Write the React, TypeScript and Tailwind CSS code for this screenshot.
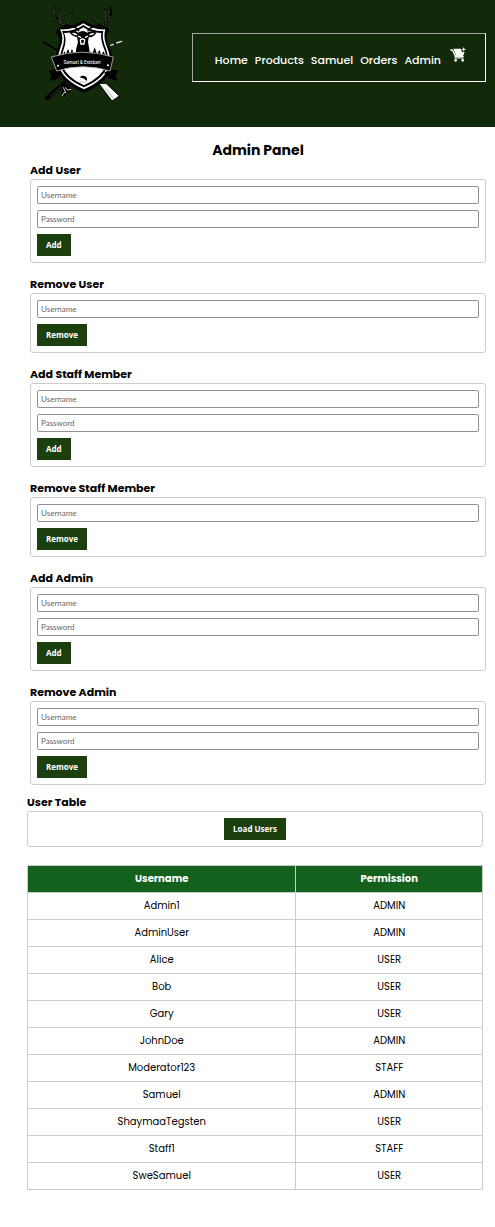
import React, { useState } from "react";

const BUTTON =
  "h-[22px] bg-[#1b400e] px-[9px] font-['Open_Sans',sans-serif] text-[8px] font-bold text-white hover:bg-[#28591a]";

const LINKS = ["Home", "Products", "Samuel", "Orders", "Admin"];

const FORMS = [
  { title: "Add User", fields: ["Username", "Password"], action: "Add" },
  { title: "Remove User", fields: ["Username"], action: "Remove" },
  { title: "Add Staff Member", fields: ["Username", "Password"], action: "Add" },
  { title: "Remove Staff Member", fields: ["Username"], action: "Remove" },
  { title: "Add Admin", fields: ["Username", "Password"], action: "Add" },
  { title: "Remove Admin", fields: ["Username", "Password"], action: "Remove" },
];

const USERS = [
  ["Admin1", "ADMIN"],
  ["AdminUser", "ADMIN"],
  ["Alice", "USER"],
  ["Bob", "USER"],
  ["Gary", "USER"],
  ["JohnDoe", "ADMIN"],
  ["Moderator123", "STAFF"],
  ["Samuel", "ADMIN"],
  ["ShaymaaTegsten", "USER"],
  ["Staff1", "STAFF"],
  ["SweSamuel", "USER"],
];

function Logo() {
  return (
    <svg viewBox="30 12 258 300" className="h-[100px] w-[86px]" role="img" aria-label="Samuel & Esteban">
      {/* rifle barrels and stocks */}
      <g strokeLinecap="round" fill="none">
        <path d="M40 125 L82 151" stroke="#000" strokeWidth="5" />
        <path d="M237 139 L276 125" stroke="#000" strokeWidth="3" />
        <path d="M242 136 L250 133 M260 129 L275 124" stroke="#e5e5e5" strokeWidth="4" />
        <path d="M102 250 L52 294" stroke="#000" strokeWidth="13" />
        <path d="M96 259 L62 289" stroke="#4b5548" strokeWidth="2" />
      </g>
      <path d="M104 248 L120 260 L126 270 L114 278 L102 292 L94 286 L96 268 Z" fill="#000" />
      <path d="M106 262 L112 270 L124 268 M104 276 L96 288 M100 262 L108 280" stroke="#ddd" strokeWidth="3" fill="none" />
      <path d="M206 250 L228 250 L268 288 L246 303 Z" fill="#fff" stroke="#000" strokeWidth="3" />
      <path d="M228 266 L250 296" stroke="#888" strokeWidth="2" />
      {/* shield */}
      <path d="M160 60 Q190 82 228 80 Q240 84 236 96 Q222 110 238 142 Q252 170 244 204 Q232 248 162 278 Q92 248 80 204 Q72 170 84 142 Q96 112 78 98 Q78 84 92 80 Q132 82 160 60 Z" fill="#000" />
      <path d="M160 70 Q190 90 226 88 Q218 112 232 144 Q244 172 236 202 Q222 242 162 268 Q102 242 88 202 Q80 172 91 144 Q104 112 90 88 Q132 90 160 70 Z" fill="#fff" />
      <path d="M160 75 Q188 95 220 93 Q214 114 228 146 Q238 172 231 202 Q218 238 162 262 Q106 238 93 202 Q86 172 96 146 Q108 114 96 93 Q132 95 160 75 Z" fill="#000" />
      <path d="M160 82 Q188 100 214 99 Q210 118 223 148 Q232 172 227 198 Q214 232 162 256 Q110 232 97 198 Q92 172 101 148 Q112 118 102 99 Q134 100 160 82 Z" fill="#fff" />
      {/* forest */}
      <path d="M94 178 L103 154 L108 162 L114 146 L120 162 L126 146 L132 164 L138 154 L146 162 L170 162 L180 154 L186 164 L194 142 L201 162 L208 150 L214 164 L221 154 L230 178 Z" fill="#000" />
      {/* antlers */}
      <g fill="none" strokeLinecap="round" strokeLinejoin="round">
        <path d="M146 92 Q134 74 104 78 Q78 68 72 48 Q66 32 78 22 M94 72 Q84 54 88 28 M108 76 Q120 66 126 40 M70 42 L82 56" stroke="#000" strokeWidth="5" />
        <path d="M174 92 Q186 74 214 78 Q236 68 240 48 Q246 34 240 22 M224 70 Q232 50 226 28 M210 76 Q192 62 182 42 M244 44 L234 58" stroke="#000" strokeWidth="5" />
        <path d="M100 75 Q78 66 72 48 Q67 36 74 26 M92 68 Q84 52 88 34 M112 72 Q120 62 125 44 M220 74 Q236 66 240 48 M226 64 Q230 48 226 32 M206 70 Q192 60 183 44" stroke="#7f897b" strokeWidth="1.5" />
      </g>
      {/* deer */}
      <path d="M118 96 Q132 88 145 98 Q158 88 172 98 Q184 90 200 98 Q190 112 176 112 L174 126 Q180 150 178 168 L138 168 Q136 146 144 126 L141 111 Q126 110 118 96 Z" fill="#000" />
      <path d="M126 99 Q136 97 143 105 Q133 108 126 99 Z M194 100 Q184 97 176 105 Q186 108 194 100 Z" fill="#fff" />
      <path d="M144 108 L153 113 M174 108 L165 113 M151 120 Q157 114 164 120 L162 132 L153 132 Z" fill="none" stroke="#fff" strokeWidth="4" />
      {/* ribbon */}
      <path d="M76 208 L56 212 L64 226 L58 244 L84 236 L96 218 Z M242 208 L266 212 L256 226 L264 242 L238 236 L222 218 Z" fill="#000" />
      <path d="M64 171 Q155 142 250 171 L240 213 Q158 188 80 213 Z" fill="#000" stroke="#b7bdb5" strokeWidth="2.5" />
      <circle cx="84" cy="197" r="3" fill="#fff" />
      <circle cx="234" cy="196" r="3" fill="#fff" />
      <text x="156" y="193" textAnchor="middle" fill="#fff" fontFamily="Inter, sans-serif" fontSize="13" fontWeight="500">
        Samuel &amp; Esteban
      </text>
      {/* fish */}
      <path d="M149 232 Q156 225 166 229 Q174 235 170 243 Q163 234 149 232 Z" fill="#000" />
      <path d="M148 243 Q158 249 170 246" stroke="#888" strokeWidth="1.5" fill="none" />
    </svg>
  );
}

function CartIcon() {
  return (
    <svg viewBox="0 0 48 45" className="h-[15px] w-4" aria-hidden="true">
      <path d="M1 9 H7 L17 29 H41" stroke="#fff" strokeWidth="4" fill="none" strokeLinejoin="round" />
      <path d="M10 5 H33 L35 14 L44 16 L39 27 H19 Z" fill="#fff" />
      <path d="M17 26 L14 33 H41" stroke="#fff" strokeWidth="3" fill="none" />
      <circle cx="17" cy="40" r="4" fill="#fff" />
      <circle cx="38" cy="40" r="4" fill="#fff" />
      <path d="M41 0 L43 5 L48 7 L43 9 L41 14 L39 9 L34 7 L39 5 Z" fill="#fff" />
    </svg>
  );
}

function AccountForm({ title, fields, action }: { title: string; fields: string[]; action: string }) {
  return (
    <section>
      <h2 className="text-[11px] leading-[18px] font-bold">{title}</h2>
      <form
        onSubmit={(e) => e.preventDefault()}
        className="flex flex-col items-start gap-1.5 rounded-[3px] border border-[#ccc] p-1.5"
      >
        {fields.map((field) => (
          <input
            key={field}
            aria-label={field}
            type={field === "Password" ? "password" : "text"}
            placeholder={field}
            className="h-[18px] w-full rounded-[2px] border border-[#8f8f9d] bg-white px-[3px] font-['Lato',sans-serif] text-[8px] leading-4 placeholder:text-[#666]"
          />
        ))}
        <button type="submit" className={BUTTON}>
          {action}
        </button>
      </form>
    </section>
  );
}

export default function App() {
  const [users, setUsers] = useState(USERS);
  return (
    <div className="min-h-screen bg-white pb-9 font-['Poppins','Inter',sans-serif] text-black">
      <header className="flex h-[127px] items-start justify-between bg-[#132a0a] pr-[9px] pl-10">
        <a href="#home" className="mt-1">
          <Logo />
        </a>
        <nav className="mt-[33px] flex h-[49px] items-center gap-[7px] border border-t-[#a5a5a5] border-r-white border-b-white border-l-[#a5a5a5] pt-1.5 pr-[19px] pl-[22px] text-[11px] font-medium text-white">
          {LINKS.map((link) => (
            <a key={link} href={"#" + link.toLowerCase()} className="hover:underline">
              {link}
            </a>
          ))}
          <a href="#cart" aria-label="Cart" className="mb-3 ml-0.5">
            <CartIcon />
          </a>
        </nav>
      </header>
      <main>
        <div className="pt-3 pr-[9px] pl-[30px]">
          <h1 className="text-center text-[14px] leading-[22px] font-bold">Admin Panel</h1>
          <div className="flex flex-col gap-3">
            {FORMS.map((form) => (
              <AccountForm key={form.title} {...form} />
            ))}
          </div>
        </div>
        <section className="mt-2 pr-3 pl-[27px]">
          <h2 className="text-[11px] leading-[18px] font-bold">User Table</h2>
          <div className="flex justify-center rounded-[3px] border border-[#ccc] p-1.5">
            <button type="button" className={BUTTON} onClick={() => setUsers([...USERS])}>
              Load Users
            </button>
          </div>
          <table className="mt-[18px] w-full table-fixed border-collapse text-center text-[10px] leading-[14px]">
            <thead>
              <tr className="h-[27px] bg-[#14611e] text-white">
                <th className="w-[59%] border border-[#ccc] font-bold">Username</th>
                <th className="border border-[#ccc] font-bold">Permission</th>
              </tr>
            </thead>
            <tbody>
              {users.map(([name, permission]) => (
                <tr key={name} className="h-[27px]">
                  <td className="border border-[#ccc]">{name}</td>
                  <td className="border border-[#ccc]">{permission}</td>
                </tr>
              ))}
            </tbody>
          </table>
        </section>
      </main>
    </div>
  );
}
